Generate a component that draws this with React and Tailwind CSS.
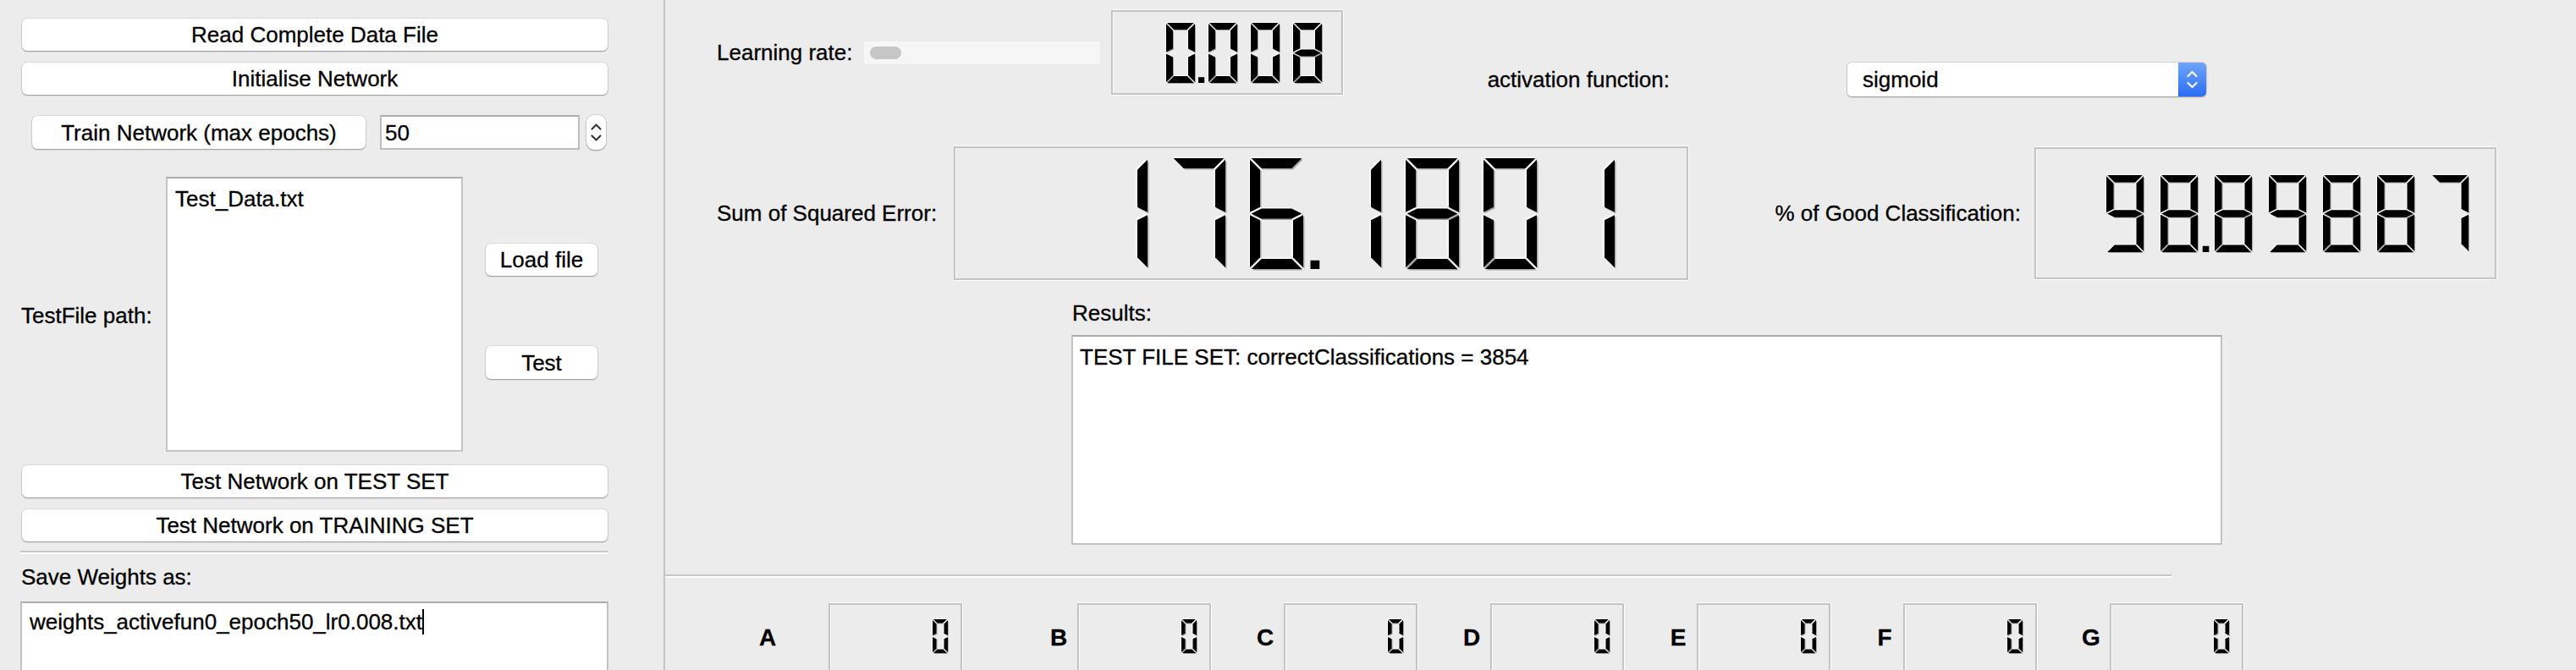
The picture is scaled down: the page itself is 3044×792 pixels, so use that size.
import React from "react";

const SEGS = {
  "0": "abcdef",
  "1": "bc",
  "2": "abged",
  "3": "abgcd",
  "4": "fgbc",
  "5": "afgcd",
  "6": "afgecd",
  "7": "abc",
  "8": "abcdefg",
  "9": "abcdfg",
};

function segPolys(W, H, t, g) {
  const m = H / 2;
  const h = t / 2;
  return {
    a: [[g, 0], [W - g, 0], [W - g - t, t], [g + t, t]],
    b: [[W, g], [W, m - g], [W - t, m - h - g], [W - t, g + t]],
    c: [[W, m + g], [W, H - g], [W - t, H - t - g], [W - t, m + h + g]],
    d: [[g, H], [W - g, H], [W - g - t, H - t], [g + t, H - t]],
    e: [[0, m + g], [t, m + h + g], [t, H - t - g], [0, H - g]],
    f: [[0, g], [t, g + t], [t, m - h - g], [0, m - g]],
    g: [[g, m], [g + t, m - h], [W - g - t, m - h], [W - g, m], [W - g - t, m + h], [g + t, m + h]],
  };
}

function LcdDigits({ value, W, H, t, pitch }) {
  const digits = [];
  for (const ch of value) {
    if (ch === ".") digits[digits.length - 1].dp = true;
    else digits.push({ ch, dp: false });
  }
  const n = digits.length;
  const width = (n - 1) * pitch + W;
  const g = Math.max(1, t * 0.14);
  const polys = segPolys(W, H, t, g);
  const o = Math.max(1, t / 8);
  const pts = (p) => p.map(([x, y]) => `${x},${y}`).join(" ");
  return (
    <svg width={width + 4} height={H + 4} viewBox={`-2 -2 ${width + 4} ${H + 4}`}>
      {digits.map((d, i) => (
        <g key={i} transform={`translate(${i * pitch},0)`}>
          {SEGS[d.ch].split("").map((s) => (
            <g key={s}>
              <polygon points={pts(polys[s])} fill="#a3a3a3" transform={`translate(${o},${o})`} />
              <polygon points={pts(polys[s])} fill="#ffffff" transform={`translate(${-o},${-o})`} />
              <polygon points={pts(polys[s])} fill="#000000" />
            </g>
          ))}
          {d.dp && (
            <rect x={W + (pitch - W) / 2 - t / 2} y={H - t * 0.85} width={t * 0.9} height={t * 0.85} fill="#000" />
          )}
        </g>
      ))}
    </svg>
  );
}

const lcdFrame =
  "border-2 border-[#c4c4c4] shadow-[0_-1px_0_#ffffff,0_1px_0_#ffffff,1px_0_0_#ffffff,inset_1px_0_0_#ffffff] flex justify-end items-start shrink-0";

const btn =
  "bg-white rounded-[6px] shadow-[0_0_0_1px_rgba(0,0,0,0.07),0_1px_1.5px_rgba(0,0,0,0.32)] flex items-center justify-center shrink-0";

function Chevrons({ color, w, h }) {
  const cx = w / 2;
  const cy = h / 2;
  return (
    <svg width={w} height={h} viewBox={`0 0 ${w} ${h}`}>
      <path d={`M${cx - 5} ${cy - 4} L${cx} ${cy - 9} L${cx + 5} ${cy - 4}`} fill="none" stroke={color} strokeWidth="2.2" strokeLinecap="round" strokeLinejoin="round" />
      <path d={`M${cx - 5} ${cy + 4} L${cx} ${cy + 9} L${cx + 5} ${cy + 4}`} fill="none" stroke={color} strokeWidth="2.2" strokeLinecap="round" strokeLinejoin="round" />
    </svg>
  );
}

function SmallLcd({ letter, cellMl, boxMl }) {
  return (
    <>
      <div className={`${cellMl} w-[44px] shrink-0 text-center text-[28px] leading-[32px] font-bold`}>{letter}</div>
      <div className={`${boxMl} w-[158px] h-[82px] ${lcdFrame} pt-[15px] pr-[13px]`}>
        <LcdDigits value="0" W={18} H={40} t={4.5} pitch={26} />
      </div>
    </>
  );
}

export default function App() {
  return (
    <div className="w-[3044px] h-[792px] overflow-hidden bg-[#ececec] flex items-start font-['Liberation_Sans',Arial,sans-serif] text-[26px] leading-[30px] text-black [-webkit-text-stroke:0.3px_#000]">
      {/* Left panel */}
      <div className="w-[784px] h-[792px] shrink-0 flex flex-col pt-[22px] *:shrink-0">
        <div className={`${btn} ml-[26px] w-[692px] h-[38px]`}>Read Complete Data File</div>
        <div className={`${btn} mt-[14px] ml-[26px] w-[692px] h-[38px]`}>Initialise Network</div>

        <div className="mt-[23px] h-[43px] flex items-center">
          <div className={`${btn} ml-[38px] w-[394px] h-[39px]`}>Train Network (max epochs)</div>
          <div className="ml-[17px] w-[236px] h-[41px] bg-white border-2 border-[#bdbdbd] border-t-[#ababab] flex items-center pl-[4px]">
            50
          </div>
          <div className="ml-[8px] w-[23px] h-[41px] bg-white rounded-[9px] shadow-[0_0_0_1px_rgba(0,0,0,0.1),0_1px_1.5px_rgba(0,0,0,0.3)] flex items-center justify-center">
            <Chevrons color="#3a3a3a" w={23} h={41} />
          </div>
        </div>

        <div className="mt-[31px] h-[325px] flex">
          <div className="w-[196px] pl-[25px] pt-[3px] flex items-center">TestFile path:</div>
          <div className="w-[351px] h-[325px] bg-white border-2 border-[#c4c4c4] border-t-[#ababab] pl-[9px] pt-[9px]">
            Test_Data.txt
          </div>
          <div className="ml-[27px] w-[132px] flex flex-col">
            <div className={`${btn} mt-[79px] h-[38px]`}>Load file</div>
            <div className={`${btn} mt-[83px] h-[39px]`}>Test</div>
          </div>
        </div>

        <div className={`${btn} mt-[16px] ml-[26px] w-[692px] h-[38px]`}>Test Network on TEST SET</div>
        <div className={`${btn} mt-[14px] ml-[26px] w-[692px] h-[38px]`}>Test Network on TRAINING SET</div>

        <div className="mt-[11px] ml-[24px] w-[695px]">
          <div className="h-[2px] bg-[#cacaca]" />
          <div className="h-[2px] bg-white" />
        </div>

        <div className="mt-[12px] ml-[25px] h-[30px]">Save Weights as:</div>

        <div className="mt-[14px] ml-[24px] w-[695px] h-[100px] bg-white border-2 border-[#c0c0c0] border-t-[#ababab] pl-[9px] pt-[7px] flex items-start">
          <span>weights_activefun0_epoch50_lr0.008.txt</span>
          <span className="inline-block w-[2px] h-[30px] bg-black" />
        </div>
      </div>

      {/* Right panel */}
      <div className="flex-1 h-[792px] border-l-2 border-[#c4c4c4] flex flex-col *:shrink-0">
        {/* Row 1 */}
        <div className="flex items-start pt-[12px] pl-[61px]">
          <div className="flex items-center h-[100px]">
            <div className="w-[174px]">Learning rate:</div>
            <div className="w-[279px] h-[27px] bg-[#f6f6f6] flex items-center pl-[7px]">
              <div className="w-[37px] h-[15px] rounded-full bg-[#c6c6c6]" />
            </div>
            <div className={`ml-[13px] w-[274px] h-[100px] ${lcdFrame} pt-[11px] pr-[21px]`}>
              <LcdDigits value="0.008" W={34} H={71} t={8} pitch={50} />
            </div>
          </div>
          <div className="flex items-center h-[40px] mt-[62px]">
            <div className="w-[596px] text-right pr-[210px]">activation function:</div>
            <div className="w-[424px] h-[40px] flex bg-white rounded-[5px] overflow-hidden shadow-[0_0_0_1px_rgba(0,0,0,0.1),0_1px_1.5px_rgba(0,0,0,0.3)]">
              <div className="flex-1 pl-[18px] flex items-center">sigmoid</div>
              <div className="w-[33px] bg-linear-to-b from-[#6fa4f8] to-[#2a6cf6] flex items-center justify-center">
                <Chevrons color="#ffffff" w={33} h={40} />
              </div>
            </div>
          </div>
        </div>

        {/* Row 2 */}
        <div className="flex items-center mt-[59px] pl-[61px]">
          <div className="w-[280px] shrink-0">Sum of Squared Error:</div>
          <div className={`w-[868px] h-[158px] ${lcdFrame} pt-[10px] pr-[83px]`}>
            <LcdDigits value="176.1801" W={63} H={131} t={12} pitch={92} />
          </div>
          <div className="w-[409px] shrink-0 text-right pr-[16px]">% of Good Classification:</div>
          <div className={`w-[546px] h-[156px] ${lcdFrame} pt-[29px] pr-[29px]`}>
            <LcdDigits value="98.89887" W={44} H={91} t={8.5} pitch={64} />
          </div>
        </div>

        {/* Results */}
        <div className="mt-[24px] ml-[481px] h-[30px]">Results:</div>
        <div className="mt-[11px] ml-[480px] w-[1360px] h-[248px] bg-white border-2 border-[#c2c2c2] border-t-[#ababab] pl-[8px] pt-[9px]">
          TEST FILE SET: correctClassifications = 3854
        </div>

        <div className="mt-[35px] w-[1780px]">
          <div className="h-[2px] bg-[#c6c6c6]" />
          <div className="h-[2px] bg-white" />
        </div>

        {/* Bottom row */}
        <div className="mt-[30px] flex items-center">
          <SmallLcd letter="A" cellMl="ml-[99px]" boxMl="ml-[50px]" />
          <SmallLcd letter="B" cellMl="ml-[92px]" boxMl="" />
          <SmallLcd letter="C" cellMl="ml-[42px]" boxMl="" />
          <SmallLcd letter="D" cellMl="ml-[42px]" boxMl="" />
          <SmallLcd letter="E" cellMl="ml-[42px]" boxMl="" />
          <SmallLcd letter="F" cellMl="ml-[42px]" boxMl="" />
          <SmallLcd letter="G" cellMl="ml-[42px]" boxMl="" />
        </div>
      </div>
    </div>
  );
}
